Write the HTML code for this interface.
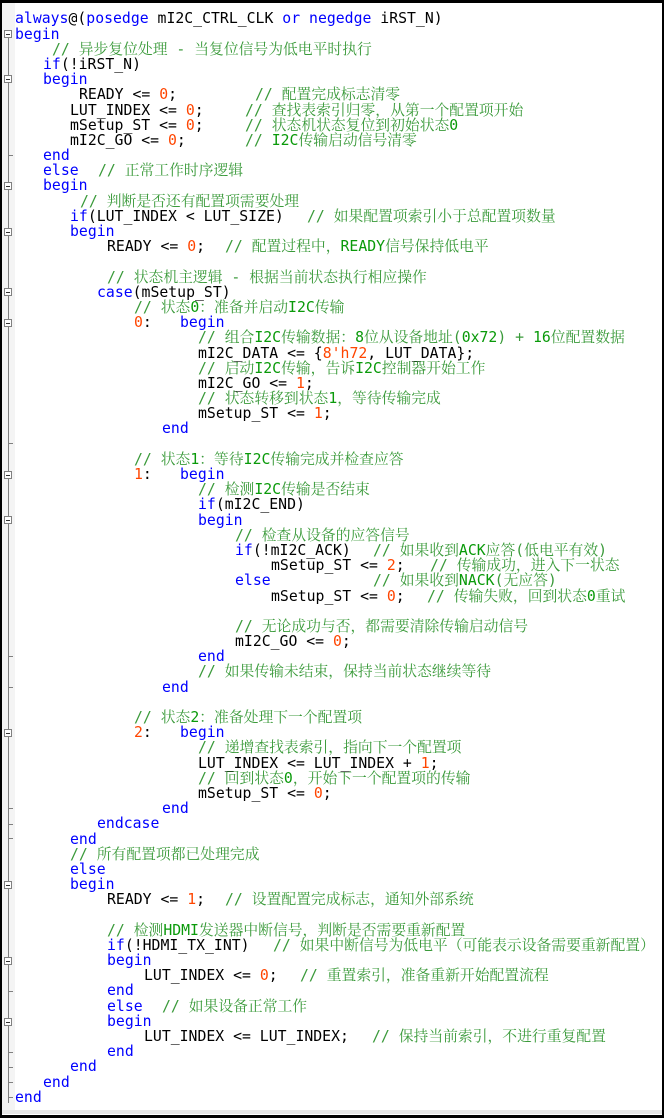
<!DOCTYPE html>
<html><head><meta charset="utf-8"><style>
html,body{margin:0;padding:0}
body{width:664px;height:1117px;background:#fff;position:relative;overflow:hidden;
font-family:"DejaVu Sans Mono","Liberation Mono","Noto Sans CJK SC",monospace;font-size:14.8px;color:#000}
.frame{position:absolute;left:0;top:0;width:660px;height:1112px;border-top:3px solid #000;border-left:2px solid #000;border-right:2px solid #000;border-bottom:3px solid #000;box-sizing:content-box}
.sb{position:absolute;left:2px;top:1110px;width:660px;height:4px;background:#e6e6e6}
.gut{position:absolute;left:2px;top:3px;width:13px;height:1107px;background:#f4f4f4}
#code{position:absolute;left:0;top:11.4px;width:664px}
.l{position:relative;height:15.2px;line-height:15.2px;white-space:pre}
.l span{position:absolute;top:0}
.k{color:#0000ff}
.n{color:#ff4500}
.c{color:#3a9a3a;font-family:"DejaVu Sans Mono","Noto Serif CJK SC",serif}
.c b{color:#0a9a0a;font-weight:normal;font-family:"DejaVu Sans Mono",monospace}
.vl{position:absolute;left:8px;width:1px;background:#808080}
.box{position:absolute;left:4px;width:8px;height:8px;border:1px solid #808080;background:#fff;box-sizing:border-box}
.box:after{content:"";position:absolute;left:1px;right:1px;top:3px;height:1px;background:#333}
.tk{position:absolute;left:8px;width:5px;height:1px;background:#808080}
</style></head><body>
<div class="frame"></div>
<div class="gut"></div>
<div class="sb"></div>
<div class="vl" style="top:38px;height:1065px"></div>
<div class="box" style="top:30px"></div>
<div class="box" style="top:75px"></div>
<div class="box" style="top:182px"></div>
<div class="box" style="top:228px"></div>
<div class="box" style="top:288px"></div>
<div class="box" style="top:319px"></div>
<div class="box" style="top:471px"></div>
<div class="box" style="top:516px"></div>
<div class="box" style="top:729px"></div>
<div class="box" style="top:881px"></div>
<div class="box" style="top:957px"></div>
<div class="box" style="top:1018px"></div>
<div class="tk" style="top:155px"></div>
<div class="tk" style="top:443px"></div>
<div class="tk" style="top:656px"></div>
<div class="tk" style="top:687px"></div>
<div class="tk" style="top:808px"></div>
<div class="tk" style="top:824px"></div>
<div class="tk" style="top:838px"></div>
<div class="tk" style="top:991px"></div>
<div class="tk" style="top:1052px"></div>
<div class="tk" style="top:1067px"></div>
<div class="tk" style="top:1082px"></div>
<div class="tk" style="top:1097px"></div>
<div id="code">
<div class="l"><span style="left:15px"><i class="k" style="font-style:normal">always</i>@(<i class="k" style="font-style:normal">posedge</i> mI2C_CTRL_CLK <i class="k" style="font-style:normal">or</i> <i class="k" style="font-style:normal">negedge</i> iRST_N)</span></div>
<div class="l"><span class="k" style="left:15px">begin</span></div>
<div class="l"><span class="c" style="left:52px">// 异步复位处理 - 当复位信号为低电平时执行</span></div>
<div class="l"><span style="left:43px"><i class="k" style="font-style:normal">if</i>(!iRST_N)</span></div>
<div class="l"><span class="k" style="left:43px">begin</span></div>
<div class="l"><span style="left:79px">READY &lt;= <i class="n" style="font-style:normal">0</i>;</span><span class="c" style="left:255px">// 配置完成标志清零</span></div>
<div class="l"><span style="left:70px">LUT_INDEX &lt;= <i class="n" style="font-style:normal">0</i>;</span><span class="c" style="left:245px">// 查找表索引归零，从第一个配置项开始</span></div>
<div class="l"><span style="left:70px">mSetup_ST &lt;= <i class="n" style="font-style:normal">0</i>;</span><span class="c" style="left:245px">// 状态机状态复位到初始状态<b>0</b></span></div>
<div class="l"><span style="left:70px">mI2C_GO &lt;= <i class="n" style="font-style:normal">0</i>;</span><span class="c" style="left:245px">// <b>I2C</b>传输启动信号清零</span></div>
<div class="l"><span class="k" style="left:43px">end</span></div>
<div class="l"><span class="k" style="left:43px">else</span><span class="c" style="left:98px">// 正常工作时序逻辑</span></div>
<div class="l"><span class="k" style="left:43px">begin</span></div>
<div class="l"><span class="c" style="left:80px">// 判断是否还有配置项需要处理</span></div>
<div class="l"><span style="left:70px"><i class="k" style="font-style:normal">if</i>(LUT_INDEX &lt; LUT_SIZE)</span><span class="c" style="left:307px">// 如果配置项索引小于总配置项数量</span></div>
<div class="l"><span class="k" style="left:70px">begin</span></div>
<div class="l"><span style="left:107px">READY &lt;= <i class="n" style="font-style:normal">0</i>;</span><span class="c" style="left:225px">// 配置过程中，<b>READY</b>信号保持低电平</span></div>
<div class="l"></div>
<div class="l"><span class="c" style="left:107px">// 状态机主逻辑 - 根据当前状态执行相应操作</span></div>
<div class="l"><span style="left:97px"><i class="k" style="font-style:normal">case</i>(mSetup_ST)</span></div>
<div class="l"><span class="c" style="left:134px">// 状态<b>0</b>：准备并启动<b>I2C</b>传输</span></div>
<div class="l"><span style="left:134px"><i class="n" style="font-style:normal">0</i>:</span><span class="k" style="left:180px">begin</span></div>
<div class="l"><span class="c" style="left:198px">// 组合<b>I2C</b>传输数据：<b>8</b>位从设备地址(<b>0x72</b>) + <b>16</b>位配置数据</span></div>
<div class="l"><span style="left:198px">mI2C_DATA &lt;= {<i class="n" style="font-style:normal">8'h72</i>, LUT_DATA};</span></div>
<div class="l"><span class="c" style="left:198px">// 启动<b>I2C</b>传输，告诉<b>I2C</b>控制器开始工作</span></div>
<div class="l"><span style="left:198px">mI2C_GO &lt;= <i class="n" style="font-style:normal">1</i>;</span></div>
<div class="l"><span class="c" style="left:198px">// 状态转移到状态<b>1</b>，等待传输完成</span></div>
<div class="l"><span style="left:198px">mSetup_ST &lt;= <i class="n" style="font-style:normal">1</i>;</span></div>
<div class="l"><span class="k" style="left:162px">end</span></div>
<div class="l"></div>
<div class="l"><span class="c" style="left:134px">// 状态<b>1</b>：等待<b>I2C</b>传输完成并检查应答</span></div>
<div class="l"><span style="left:134px"><i class="n" style="font-style:normal">1</i>:</span><span class="k" style="left:180px">begin</span></div>
<div class="l"><span class="c" style="left:198px">// 检测<b>I2C</b>传输是否结束</span></div>
<div class="l"><span style="left:198px"><i class="k" style="font-style:normal">if</i>(mI2C_END)</span></div>
<div class="l"><span class="k" style="left:198px">begin</span></div>
<div class="l"><span class="c" style="left:235px">// 检查从设备的应答信号</span></div>
<div class="l"><span style="left:235px"><i class="k" style="font-style:normal">if</i>(!mI2C_ACK)</span><span class="c" style="left:373px">// 如果收到<b>ACK</b>应答(低电平有效)</span></div>
<div class="l"><span style="left:271px">mSetup_ST &lt;= <i class="n" style="font-style:normal">2</i>;</span><span class="c" style="left:430px">// 传输成功，进入下一状态</span></div>
<div class="l"><span class="k" style="left:235px">else</span><span class="c" style="left:373px">// 如果收到<b>NACK</b>(无应答)</span></div>
<div class="l"><span style="left:271px">mSetup_ST &lt;= <i class="n" style="font-style:normal">0</i>;</span><span class="c" style="left:427px">// 传输失败，回到状态<b>0</b>重试</span></div>
<div class="l"></div>
<div class="l"><span class="c" style="left:235px">// 无论成功与否，都需要清除传输启动信号</span></div>
<div class="l"><span style="left:235px">mI2C_GO &lt;= <i class="n" style="font-style:normal">0</i>;</span></div>
<div class="l"><span class="k" style="left:198px">end</span></div>
<div class="l"><span class="c" style="left:198px">// 如果传输未结束，保持当前状态继续等待</span></div>
<div class="l"><span class="k" style="left:162px">end</span></div>
<div class="l"></div>
<div class="l"><span class="c" style="left:134px">// 状态<b>2</b>：准备处理下一个配置项</span></div>
<div class="l"><span style="left:134px"><i class="n" style="font-style:normal">2</i>:</span><span class="k" style="left:180px">begin</span></div>
<div class="l"><span class="c" style="left:198px">// 递增查找表索引，指向下一个配置项</span></div>
<div class="l"><span style="left:198px">LUT_INDEX &lt;= LUT_INDEX + <i class="n" style="font-style:normal">1</i>;</span></div>
<div class="l"><span class="c" style="left:198px">// 回到状态<b>0</b>，开始下一个配置项的传输</span></div>
<div class="l"><span style="left:198px">mSetup_ST &lt;= <i class="n" style="font-style:normal">0</i>;</span></div>
<div class="l"><span class="k" style="left:162px">end</span></div>
<div class="l"><span class="k" style="left:97px">endcase</span></div>
<div class="l"><span class="k" style="left:70px">end</span></div>
<div class="l"><span class="c" style="left:70px">// 所有配置项都已处理完成</span></div>
<div class="l"><span class="k" style="left:70px">else</span></div>
<div class="l"><span class="k" style="left:70px">begin</span></div>
<div class="l"><span style="left:107px">READY &lt;= <i class="n" style="font-style:normal">1</i>;</span><span class="c" style="left:225px">// 设置配置完成标志，通知外部系统</span></div>
<div class="l"></div>
<div class="l"><span class="c" style="left:107px">// 检测<b>HDMI</b>发送器中断信号，判断是否需要重新配置</span></div>
<div class="l"><span style="left:107px"><i class="k" style="font-style:normal">if</i>(!HDMI_TX_INT)</span><span class="c" style="left:273px">// 如果中断信号为低电平（可能表示设备需要重新配置）</span></div>
<div class="l"><span class="k" style="left:107px">begin</span></div>
<div class="l"><span style="left:144px">LUT_INDEX &lt;= <i class="n" style="font-style:normal">0</i>;</span><span class="c" style="left:300px">// 重置索引，准备重新开始配置流程</span></div>
<div class="l"><span class="k" style="left:107px">end</span></div>
<div class="l"><span class="k" style="left:107px">else</span><span class="c" style="left:162px">// 如果设备正常工作</span></div>
<div class="l"><span class="k" style="left:107px">begin</span></div>
<div class="l"><span style="left:144px">LUT_INDEX &lt;= LUT_INDEX;</span><span class="c" style="left:372px">// 保持当前索引，不进行重复配置</span></div>
<div class="l"><span class="k" style="left:107px">end</span></div>
<div class="l"><span class="k" style="left:70px">end</span></div>
<div class="l"><span class="k" style="left:43px">end</span></div>
<div class="l"><span class="k" style="left:15px">end</span></div>
</div>
</body></html>
